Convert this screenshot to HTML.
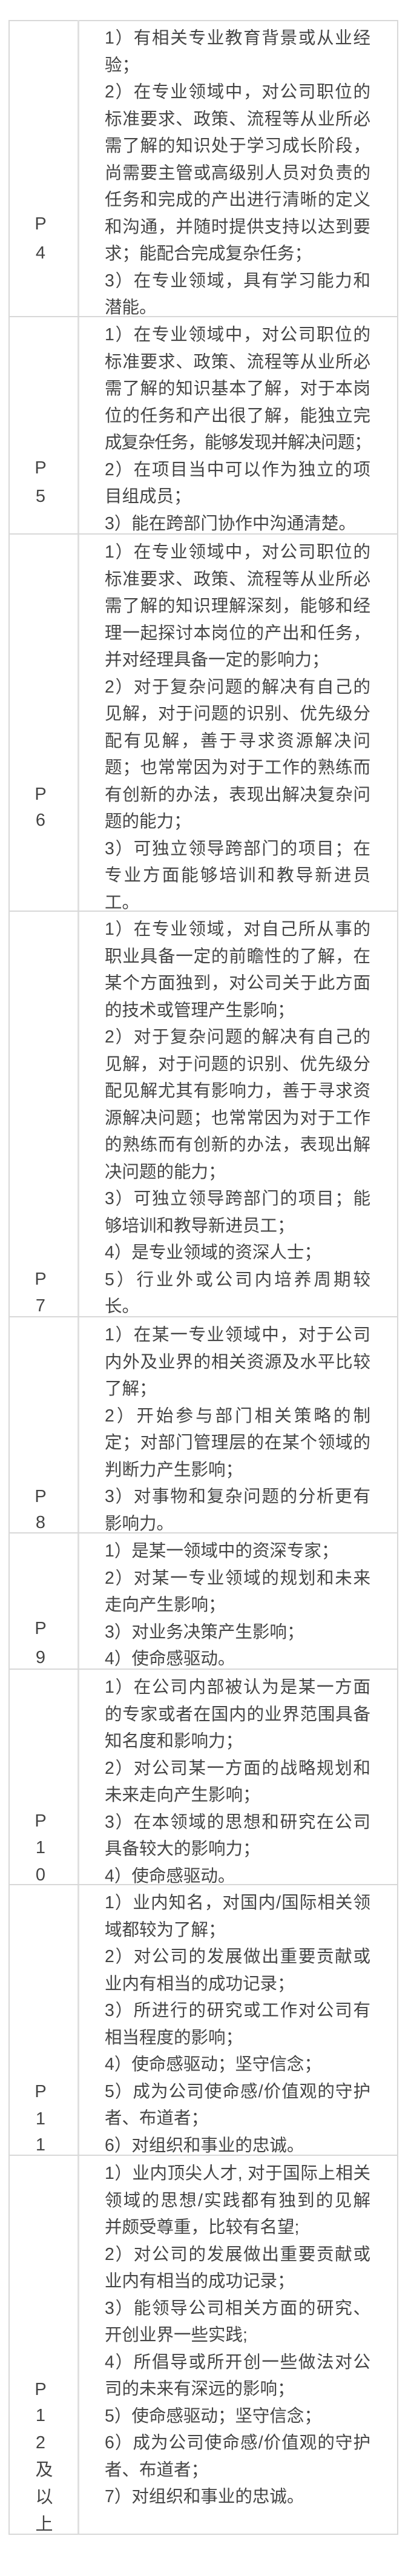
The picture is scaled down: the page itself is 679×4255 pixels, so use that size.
<!DOCTYPE html>
<html><head><meta charset="utf-8">
<style>
html,body{margin:0;padding:0;background:#fff;}
body{width:679px;height:4255px;position:relative;overflow:hidden;
font-family:"Liberation Sans","Noto Sans CJK SC",sans-serif;color:#454545;}
.box{position:absolute;left:14px;top:33px;width:640px;height:4150px;border:2px solid #d8d8d8;}
.h{position:absolute;left:14px;width:644px;height:2px;background:#d8d8d8;}
.v{position:absolute;left:128px;top:33px;width:3px;height:4152px;background:#e0e0e0;}
.t{position:absolute;left:173px;width:439px;font-size:28.5px;line-height:44.5px;}
.t div{white-space:nowrap;}
.t .j{text-align:justify;text-align-last:justify;}
.l{position:absolute;left:46px;width:42px;text-align:center;font-size:29px;line-height:44px;height:44px;}
</style></head><body>
<div class="box"></div>
<div class="v"></div>
<div class="h" style="top:522px"></div>
<div class="h" style="top:881px"></div>
<div class="h" style="top:1504px"></div>
<div class="h" style="top:2174px"></div>
<div class="h" style="top:2531px"></div>
<div class="h" style="top:2756px"></div>
<div class="h" style="top:3112px"></div>
<div class="h" style="top:3559px"></div>

<!-- labels -->
<div class="l" style="top:348px">P</div><div class="l" style="top:396px">4</div>
<div class="l" style="top:751px">P</div><div class="l" style="top:798px">5</div>
<div class="l" style="top:1290px">P</div><div class="l" style="top:1333px">6</div>
<div class="l" style="top:2091px">P</div><div class="l" style="top:2135px">7</div>
<div class="l" style="top:2450px">P</div><div class="l" style="top:2493px">8</div>
<div class="l" style="top:2668px">P</div><div class="l" style="top:2716px">9</div>
<div class="l" style="top:2986px">P</div><div class="l" style="top:3030px">1</div><div class="l" style="top:3075px">0</div>
<div class="l" style="top:3433px">P</div><div class="l" style="top:3478px">1</div><div class="l" style="top:3521px">1</div>
<div class="l" style="top:3925px">P</div><div class="l" style="top:3968px">1</div><div class="l" style="top:4013px">2</div>
<div class="l" style="top:4058px;left:52px">及</div><div class="l" style="top:4103px;left:52px">以</div><div class="l" style="top:4148px;left:52px">上</div>

<div class="t" style="top:41px">
<div class="j">1）有相关专业教育背景或从业经</div>
<div>验；</div>
<div class="j">2）在专业领域中，对公司职位的</div>
<div class="j">标准要求、政策、流程等从业所必</div>
<div class="j">需了解的知识处于学习成长阶段，</div>
<div class="j">尚需要主管或高级别人员对负责的</div>
<div class="j">任务和完成的产出进行清晰的定义</div>
<div class="j">和沟通，并随时提供支持以达到要</div>
<div>求；能配合完成复杂任务；</div>
<div class="j">3）在专业领域，具有学习能力和</div>
<div>潜能。</div>
</div>

<div class="t" style="top:531px">
<div class="j">1）在专业领域中，对公司职位的</div>
<div class="j">标准要求、政策、流程等从业所必</div>
<div class="j">需了解的知识基本了解，对于本岗</div>
<div class="j">位的任务和产出很了解，能独立完</div>
<div class="j" style="letter-spacing:-1.6px">成复杂任务，能够发现并解决问题；</div>
<div class="j">2）在项目当中可以作为独立的项</div>
<div>目组成员；</div>
<div>3）能在跨部门协作中沟通清楚。</div>
</div>

<div class="t" style="top:890px">
<div class="j">1）在专业领域中，对公司职位的</div>
<div class="j">标准要求、政策、流程等从业所必</div>
<div class="j">需了解的知识理解深刻，能够和经</div>
<div class="j">理一起探讨本岗位的产出和任务，</div>
<div>并对经理具备一定的影响力；</div>
<div class="j">2）对于复杂问题的解决有自己的</div>
<div class="j">见解，对于问题的识别、优先级分</div>
<div class="j">配有见解，善于寻求资源解决问</div>
<div class="j">题；也常常因为对于工作的熟练而</div>
<div class="j">有创新的办法，表现出解决复杂问</div>
<div>题的能力；</div>
<div class="j">3）可独立领导跨部门的项目；在</div>
<div class="j">专业方面能够培训和教导新进员</div>
<div>工。</div>
</div>

<div class="t" style="top:1513px">
<div class="j">1）在专业领域，对自己所从事的</div>
<div class="j">职业具备一定的前瞻性的了解，在</div>
<div class="j">某个方面独到，对公司关于此方面</div>
<div>的技术或管理产生影响；</div>
<div class="j">2）对于复杂问题的解决有自己的</div>
<div class="j">见解，对于问题的识别、优先级分</div>
<div class="j">配见解尤其有影响力，善于寻求资</div>
<div class="j">源解决问题；也常常因为对于工作</div>
<div class="j">的熟练而有创新的办法，表现出解</div>
<div>决问题的能力；</div>
<div class="j">3）可独立领导跨部门的项目；能</div>
<div>够培训和教导新进员工；</div>
<div>4）是专业领域的资深人士；</div>
<div class="j">5）行业外或公司内培养周期较</div>
<div>长。</div>
</div>

<div class="t" style="top:2183px">
<div class="j">1）在某一专业领域中，对于公司</div>
<div class="j">内外及业界的相关资源及水平比较</div>
<div>了解；</div>
<div class="j">2）开始参与部门相关策略的制</div>
<div class="j">定；对部门管理层的在某个领域的</div>
<div>判断力产生影响；</div>
<div class="j">3）对事物和复杂问题的分析更有</div>
<div>影响力。</div>
</div>

<div class="t" style="top:2540px">
<div>1）是某一领域中的资深专家；</div>
<div class="j">2）对某一专业领域的规划和未来</div>
<div>走向产生影响；</div>
<div>3）对业务决策产生影响；</div>
<div>4）使命感驱动。</div>
</div>

<div class="t" style="top:2765px">
<div class="j">1）在公司内部被认为是某一方面</div>
<div class="j">的专家或者在国内的业界范围具备</div>
<div>知名度和影响力；</div>
<div class="j">2）对公司某一方面的战略规划和</div>
<div>未来走向产生影响；</div>
<div class="j">3）在本领域的思想和研究在公司</div>
<div>具备较大的影响力；</div>
<div>4）使命感驱动。</div>
</div>

<div class="t" style="top:3121px">
<div class="j">1）业内知名，对国内/国际相关领</div>
<div>域都较为了解；</div>
<div class="j">2）对公司的发展做出重要贡献或</div>
<div>业内有相当的成功记录；</div>
<div class="j">3）所进行的研究或工作对公司有</div>
<div>相当程度的影响；</div>
<div>4）使命感驱动；坚守信念；</div>
<div class="j">5）成为公司使命感/价值观的守护</div>
<div>者、布道者；</div>
<div>6）对组织和事业的忠诚。</div>
</div>

<div class="t" style="top:3568px">
<div class="j">1）业内顶尖人才, 对于国际上相关</div>
<div class="j">领域的思想/实践都有独到的见解</div>
<div>并颇受尊重，比较有名望;</div>
<div class="j">2）对公司的发展做出重要贡献或</div>
<div>业内有相当的成功记录；</div>
<div class="j">3）能领导公司相关方面的研究、</div>
<div>开创业界一些实践;</div>
<div class="j">4）所倡导或所开创一些做法对公</div>
<div>司的未来有深远的影响；</div>
<div>5）使命感驱动；坚守信念；</div>
<div class="j">6）成为公司使命感/价值观的守护</div>
<div>者、布道者；</div>
<div>7）对组织和事业的忠诚。</div>
</div>
</body></html>
